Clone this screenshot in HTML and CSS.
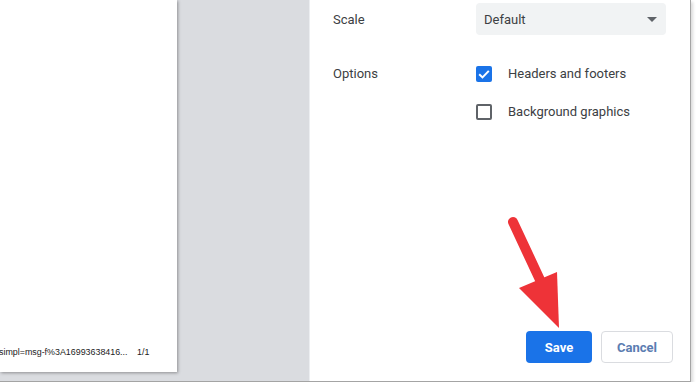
FILE: index.html
```html
<!DOCTYPE html>
<html lang="en">
<head>
    <meta charset="UTF-8">
    <meta name="viewport" content="width=device-width, initial-scale=1.0">
    <title>Print</title>
    <link rel="stylesheet" href="styles.css">
</head>
<body>
    <div class="frame">
        <!-- Preview side -->
        <div class="preview">
            <div class="page">
                <div class="page-footer">
                    <span class="page-url">simpl=msg-f%3A16993638416...</span>
                    <span class="page-num">1/1</span>
                </div>
            </div>
        </div>

        <!-- Settings side -->
        <div class="settings">
            <div class="row">
                <div class="label">Scale</div>
                <div class="select">
                    <span>Default</span>
                    <span class="caret"></span>
                </div>
            </div>

            <div class="row options">
                <div class="label">Options</div>
                <div class="checks">
                    <label class="check">
                        <span class="box checked">
                            <svg viewBox="0 0 16 16" width="16" height="16"><path d="M3.2 8.2 L6.5 11.4 L12.8 4.9" fill="none" stroke="#fff" stroke-width="2"/></svg>
                        </span>
                        Headers and footers
                    </label>
                    <label class="check">
                        <span class="box"></span>
                        Background graphics
                    </label>
                </div>
            </div>

            <div class="actions">
                <button class="btn save">Save</button>
                <button class="btn cancel">Cancel</button>
            </div>

            <!-- red pointer arrow over the panel -->
            <svg class="arrow" width="80" height="120" viewBox="0 0 80 120">
                <line x1="6" y1="6" x2="34" y2="66" stroke="#ee3338" stroke-width="10" stroke-linecap="round"/>
                <polygon points="12,72 50,56 52,112" fill="#ee3338"/>
            </svg>
        </div>
    </div>
</body>
</html>
```

FILE: styles.css
```css
/* General page */
body {
    margin: 0;
    background-color: #fff;
    font-family: Roboto, "Liberation Sans", Arial, sans-serif;
}

.frame {
    display: flex;
    width: 691px;
    height: 382px;
    border-right: 1px solid #a4a4a4;
    border-bottom: 1px solid #a4a4a4;
    box-shadow: 2px 2px 3px rgba(0, 0, 0, 0.15);
    box-sizing: border-box;
    overflow: hidden;
}

/* Preview area */
.preview {
    width: 309px;
    background-color: #dadce0;
    flex-shrink: 0;
}

.page {
    width: 177px;
    height: 372px;
    background-color: #fff;
    box-shadow: 1px 1px 3px rgba(0, 0, 0, 0.35);
    display: flex;
    flex-direction: column;
    justify-content: flex-end;
}

.page-footer {
    display: flex;
    align-items: center;
    padding-bottom: 15px;
    font-family: "Liberation Sans", Arial, sans-serif;
    font-size: 8.9px;
    color: #222;
}

.page-url {
    margin-left: -1px;
    width: 138px;
}

/* Settings panel */
.settings {
    position: relative;
    flex: 1;
    background-color: #fff;
    border-left: 1px solid #eceef1;
    padding: 3px 24px 0 23px;
    display: flex;
    flex-direction: column;
}

.row {
    display: flex;
    align-items: center;
}

.label {
    width: 143px;
    font-size: 13px;
    color: #3c4043;
}

.select {
    width: 190px;
    height: 32px;
    box-sizing: border-box;
    padding: 0 8px;
    background-color: #f1f3f4;
    border-radius: 4px;
    display: flex;
    align-items: center;
    justify-content: space-between;
    font-size: 13px;
    color: #3c4043;
}

.caret {
    width: 0;
    height: 0;
    border-left: 5px solid transparent;
    border-right: 5px solid transparent;
    border-top: 5px solid #5f6368;
    margin-right: 1px;
}

.options {
    align-items: flex-start;
    margin-top: 31px;
}

.options .label {
    line-height: 16px;
}

.checks {
    display: flex;
    flex-direction: column;
    gap: 22px;
}

.check {
    display: flex;
    align-items: center;
    font-size: 13px;
    color: #3c4043;
    line-height: 16px;
}

.box {
    width: 16px;
    height: 16px;
    box-sizing: border-box;
    border: 2px solid #5f6368;
    border-radius: 2px;
    margin-right: 16px;
    display: flex;
}

.box.checked {
    border: none;
    background-color: #1a73e8;
}

/* Buttons */
.actions {
    margin-top: auto;
    margin-bottom: 18px;
    margin-right: -7px;
    display: flex;
    justify-content: flex-end;
    gap: 9px;
}

.btn {
    height: 32px;
    border-radius: 4px;
    font-family: Roboto, "Liberation Sans", Arial, sans-serif;
    font-size: 13px;
    font-weight: bold;
    cursor: pointer;
}

.save {
    width: 66px;
    border: none;
    background-color: #1a73e8;
    color: #fff;
}

.cancel {
    width: 72px;
    border: 1px solid #dadce0;
    background-color: #fff;
    color: #5b7db1;
}

.arrow {
    position: absolute;
    left: 197px;
    top: 216px;
}
```
